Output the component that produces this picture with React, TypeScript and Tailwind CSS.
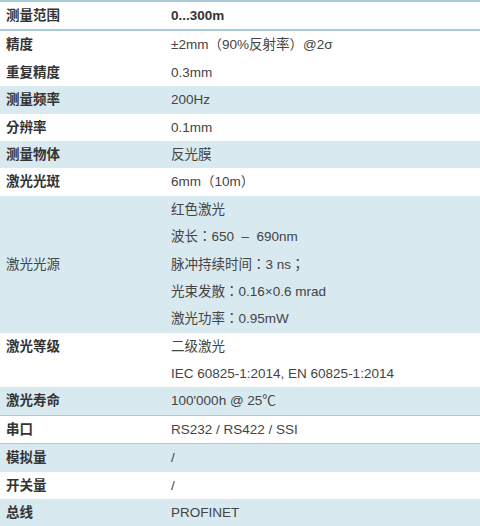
const rows: {
  label: string;
  values: string[];
  shaded?: boolean;
  bold?: boolean;
  center?: boolean;
  strongValue?: boolean;
  border?: string;
}[] = [
  { label: "测量范围", values: ["0...300m"], bold: true, strongValue: true, border: "border-t-2 border-b-2" },
  { label: "精度", values: ["±2mm（90%反射率）@2σ"], bold: true },
  { label: "重复精度", values: ["0.3mm"], bold: true },
  { label: "测量频率", values: ["200Hz"], bold: true, shaded: true },
  { label: "分辨率", values: ["0.1mm"], bold: true },
  { label: "测量物体", values: ["反光膜"], bold: true, shaded: true },
  { label: "激光光斑", values: ["6mm（10m）"], bold: true },
  {
    label: "激光光源",
    values: ["红色激光", "波长：650  –  690nm", "脉冲持续时间：3 ns；", "光束发散：0.16×0.6 mrad", "激光功率：0.95mW"],
    shaded: true,
    center: true,
  },
  { label: "激光等级", values: ["二级激光", "IEC 60825-1:2014, EN 60825-1:2014"], bold: true },
  { label: "激光寿命", values: ["100'000h @ 25℃"], bold: true, shaded: true, border: "border-b" },
  { label: "串口", values: ["RS232 / RS422 / SSI"], bold: true, border: "border-b" },
  { label: "模拟量", values: ["/"], bold: true, shaded: true },
  { label: "开关量", values: ["/"], bold: true },
  { label: "总线", values: ["PROFINET"], bold: true, shaded: true, border: "border-b-2" },
];

export default function App() {
  return (
    <div
      className="w-[480px] h-[526px] overflow-hidden bg-white text-[13.5px] text-[#3a3a3a]"
      style={{ fontFamily: '"Liberation Sans", Arial, "Noto Sans CJK TC", "Noto Sans CJK SC", sans-serif' }}
    >
      {rows.map((row, i) => (
        <div
          key={i}
          className={`flex border-[#a9cbd9] ${row.border ?? ""} ${row.shaded ? "bg-[#d8e9f0]" : "bg-white"}`}
        >
          <div
            className={`w-[171px] shrink-0 pl-[6px] flex ${row.center ? "items-center" : "items-start"} ${
              row.bold ? "font-bold text-[#333]" : "text-[#444]"
            }`}
          >
            <span className="h-[27.4px] leading-[27.4px]">{row.label}</span>
          </div>
          <div className={`flex-1 flex flex-col ${row.strongValue ? "font-bold text-[#333]" : "text-[#444]"}`}>
            {row.values.map((v, j) => (
              <div key={j} className="h-[27.4px] leading-[27.4px] whitespace-pre">
                {v}
              </div>
            ))}
          </div>
        </div>
      ))}
    </div>
  );
}
